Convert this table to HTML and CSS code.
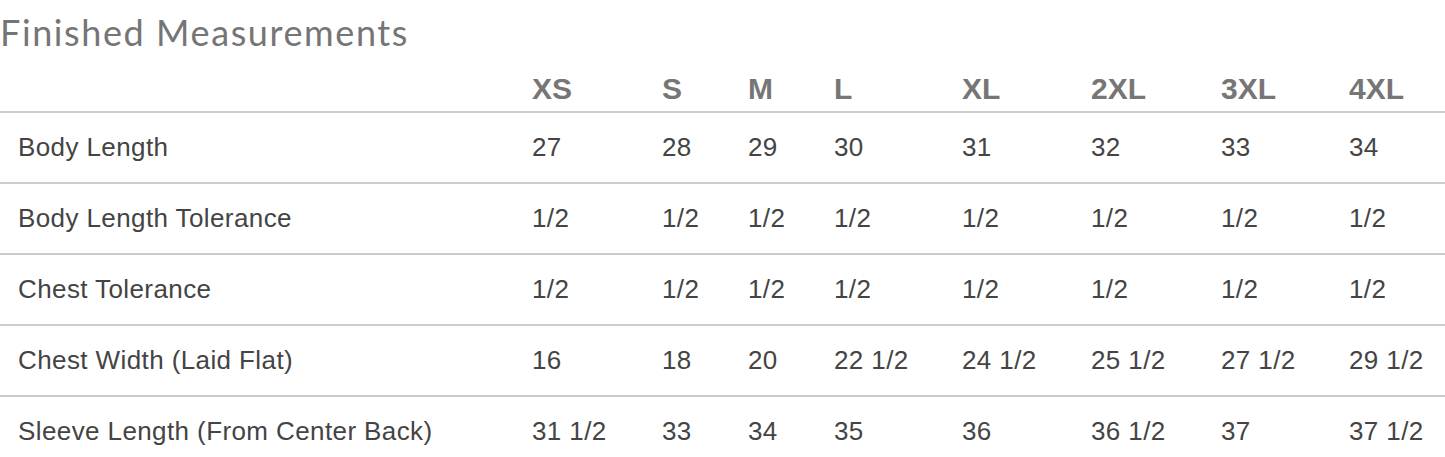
FILE: index.html
```html
<!DOCTYPE html>
<html lang="en">
<head>
<meta charset="utf-8">
<title>Finished Measurements</title>
<link rel="stylesheet" href="styles.css">
</head>
<body>
<section class="sizes">
  <h1 class="sizes-title">Finished Measurements</h1>
  <table class="size-table">
    <colgroup>
      <col class="c-label">
      <col class="c-130">
      <col class="c-86">
      <col class="c-86">
      <col class="c-128">
      <col class="c-129">
      <col class="c-130">
      <col class="c-128">
      <col>
    </colgroup>
    <thead>
      <tr>
        <th></th><th>XS</th><th>S</th><th>M</th><th>L</th><th>XL</th><th>2XL</th><th>3XL</th><th>4XL</th>
      </tr>
    </thead>
    <tbody>
      <tr><td>Body Length</td><td>27</td><td>28</td><td>29</td><td>30</td><td>31</td><td>32</td><td>33</td><td>34</td></tr>
      <tr><td>Body Length Tolerance</td><td>1/2</td><td>1/2</td><td>1/2</td><td>1/2</td><td>1/2</td><td>1/2</td><td>1/2</td><td>1/2</td></tr>
      <tr><td>Chest Tolerance</td><td>1/2</td><td>1/2</td><td>1/2</td><td>1/2</td><td>1/2</td><td>1/2</td><td>1/2</td><td>1/2</td></tr>
      <tr><td>Chest Width (Laid Flat)</td><td>16</td><td>18</td><td>20</td><td>22 1/2</td><td>24 1/2</td><td>25 1/2</td><td>27 1/2</td><td>29 1/2</td></tr>
      <tr><td>Sleeve Length (From Center Back)</td><td>31 1/2</td><td>33</td><td>34</td><td>35</td><td>36</td><td>36 1/2</td><td>37</td><td>37 1/2</td></tr>
    </tbody>
  </table>
</section>
</body>
</html>
```

FILE: styles.css
```css
html, body {
  margin: 0;
  padding: 0;
  background: #ffffff;
}

.sizes {
  width: 1445px;
}

.sizes-title {
  margin: 0;
  padding-top: 12px;
  font-family: Lato, "Open Sans", sans-serif;
  font-weight: 400;
  font-size: 36px;
  line-height: 40px;
  letter-spacing: 1.6px;
  color: #757575;
}

.size-table {
  width: 100%;
  table-layout: fixed;
  border-collapse: collapse;
  font-family: "Liberation Sans", Arial, sans-serif;
}

.c-label { width: 514px; }
.c-130 { width: 130px; }
.c-86 { width: 86px; }
.c-128 { width: 128px; }
.c-129 { width: 129px; }

.size-table th {
  height: 60px;
  padding: 0 0 5px 18px;
  box-sizing: border-box;
  vertical-align: bottom;
  text-align: left;
  font-size: 30px;
  font-weight: 700;
  color: #767676;
  border-bottom: 2px solid #cccccc;
}

.size-table td {
  height: 69px;
  padding: 0 0 0 18px;
  vertical-align: middle;
  text-align: left;
  font-size: 26px;
  letter-spacing: 0.4px;
  color: #444444;
  white-space: nowrap;
  border-bottom: 2px solid #cccccc;
}
```
